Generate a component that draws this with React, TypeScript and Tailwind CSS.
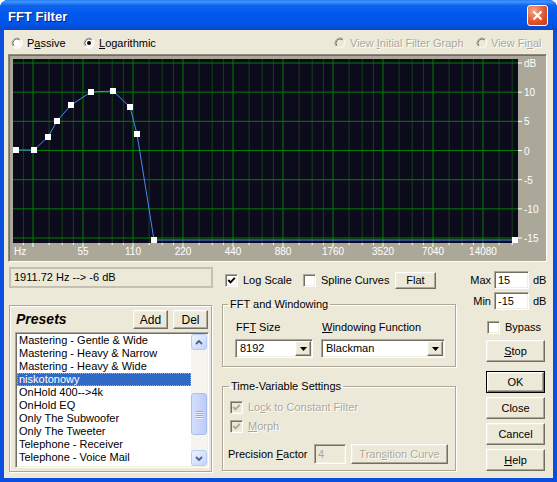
import React from 'react';

const sunken =
  'border border-t-[#ACA899] border-l-[#ACA899] border-b-white border-r-white shadow-[inset_1px_1px_0_#716F64,inset_-1px_-1px_0_#F1EFE2]';
const raised =
  'border border-t-white border-l-white border-b-[#716F64] border-r-[#716F64] shadow-[inset_-1px_-1px_0_#ACA899,inset_1px_1px_0_#F1EFE2]';
const etched = 'border border-[#ACA899] shadow-[inset_1px_1px_0_#fff,1px_1px_0_#fff]';
const grayText = 'text-[#ACA899] [text-shadow:1px_1px_0_#fff]';

function U({ children }: { children: React.ReactNode }) {
  return <span className="underline decoration-1 underline-offset-[1px]">{children}</span>;
}

function Radio({ checked, disabled }: { checked?: boolean; disabled?: boolean }) {
  return (
    <svg width="12" height="12" viewBox="0 0 12 12" className="shrink-0">
      <circle cx="6" cy="6" r="5.5" fill={disabled ? '#ECE9D8' : '#fff'} />
      <path d="M2.46 9.54 A5 5 0 0 1 9.54 2.46" stroke="#ACA899" fill="none" />
      <path d="M9.54 2.46 A5 5 0 0 1 2.46 9.54" stroke="#fff" fill="none" />
      <path d="M3.17 8.83 A4 4 0 0 1 8.83 3.17" stroke="#716F64" fill="none" />
      <path d="M8.83 3.17 A4 4 0 0 1 3.17 8.83" stroke="#F1EFE2" fill="none" />
      {checked && <circle cx="6" cy="6" r="2" fill="#000" />}
    </svg>
  );
}

function Check({ checked, disabled }: { checked?: boolean; disabled?: boolean }) {
  return (
    <span
      className={`w-[13px] h-[13px] shrink-0 flex items-center justify-center ${sunken} ${
        disabled ? 'bg-[#ECE9D8]' : 'bg-white'
      }`}
    >
      {checked && (
        <svg width="9" height="9" viewBox="0 0 9 9">
          <path
            d="M1.3 4 L3.5 6.3 L7.8 1.8"
            stroke={disabled ? '#ACA899' : '#000'}
            strokeWidth="1.9"
            fill="none"
          />
        </svg>
      )}
    </span>
  );
}

function Btn({
  children,
  className = '',
  disabled,
}: {
  children: React.ReactNode;
  className?: string;
  disabled?: boolean;
}) {
  return (
    <button
      type="button"
      className={`flex items-center justify-center bg-[#ECE9D8] ${raised} ${
        disabled ? grayText : 'text-black'
      } ${className}`}
    >
      {children}
    </button>
  );
}

function Combo({ value, className = '' }: { value: string; className?: string }) {
  return (
    <div className={`h-[19px] bg-white flex p-[1px] ${sunken} ${className}`}>
      <div className="flex-1 flex items-center pl-[3px]">{value}</div>
      <div className={`w-[16px] bg-[#ECE9D8] flex items-center justify-center ${raised}`}>
        <svg width="7" height="4" viewBox="0 0 7 4">
          <path d="M0 0h7L3.5 4z" fill="#000" />
        </svg>
      </div>
    </div>
  );
}

function Edit({ value, className = '', disabled }: { value: string; className?: string; disabled?: boolean }) {
  return (
    <div
      className={`flex items-center pl-[3px] ${sunken} ${
        disabled ? 'bg-[#ECE9D8] text-[#ACA899]' : 'bg-white'
      } ${className}`}
    >
      {value}
    </div>
  );
}

// graph geometry (svg coords, panel inner origin)
const majorX = Array.from({ length: 10 }, (_, k) => 24 + 50 * k);
const minorX = [14.4, ...majorX.flatMap((b) => [b + 16.1, b + 29.2, b + 40.4])].filter(
  (x) => x > 4 && x < 509
);
const hY = Array.from({ length: 7 }, (_, i) => 8 + i * 29.17);
const dbLabels = ['dB', '10', '5', '0', '-5', '-10', '-15'];
const hzLabels = ['55', '110', '220', '440', '880', '1760', '3520', '7040', '14080'];
const points: [number, number][] = [
  [7, 95],
  [25, 95],
  [39, 82],
  [48, 66],
  [62, 50],
  [82, 37],
  [104, 36],
  [121, 52],
  [128, 79],
  [145, 185],
  [506, 185],
];

function Graph() {
  return (
    <svg width="535" height="204" viewBox="0 0 535 204" className="block">
      <rect x="4" y="4" width="505" height="184" fill="#0B0B1B" />
      {minorX.map((x) => (
        <line key={'m' + x} x1={x} x2={x} y1="4" y2="188" stroke="#17401A" />
      ))}
      {majorX.map((x) => (
        <line key={'M' + x} x1={x} x2={x} y1="4" y2="188" stroke="#007F00" />
      ))}
      {hY.map((y) => (
        <line key={'h' + y} x1="4" x2="509" y1={y} y2={y} stroke="#007F00" />
      ))}
      <polyline
        points={points.map((p) => p.join(',')).join(' ')}
        fill="none"
        stroke="#4C86F5"
        strokeWidth="1"
      />
      {points.map(([x, y]) => (
        <rect key={'p' + x} x={x - 3} y={y - 3} width="6" height="6" fill="#fff" />
      ))}
      {hY.map((y, i) => (
        <g key={'r' + i}>
          <line x1="509" x2="513" y1={y} y2={y} stroke="#fff" />
          <text
            x="515"
            y={y + 4}
            fill="#fff"
            fontSize="10"
            fontFamily="Liberation Sans, Arial, sans-serif"
          >
            {dbLabels[i]}
          </text>
        </g>
      ))}
      {majorX.map((x) => (
        <line key={'t' + x} x1={x} x2={x} y1="188" y2="192" stroke="#fff" />
      ))}
      {minorX.map((x) => (
        <line key={'tm' + x} x1={x} x2={x} y1="188" y2="190" stroke="#fff" />
      ))}
      <text x="5" y="200" fill="#fff" fontSize="10" fontFamily="Liberation Sans, Arial, sans-serif">
        Hz
      </text>
      {hzLabels.map((l, i) => (
        <text
          key={l}
          x={74 + 50 * i}
          y="200"
          fill="#fff"
          fontSize="10"
          textAnchor="middle"
          fontFamily="Liberation Sans, Arial, sans-serif"
        >
          {l}
        </text>
      ))}
    </svg>
  );
}

const presets = [
  'Mastering - Gentle & Wide',
  'Mastering - Heavy & Narrow',
  'Mastering - Heavy & Wide',
  'niskotonowy',
  'OnHold 400-->4k',
  'OnHold EQ',
  'Only The Subwoofer',
  'Only The Tweeter',
  'Telephone - Receiver',
  'Telephone - Voice Mail',
  'Thin Client Speaker',
];

function ScrollBtn({ up }: { up?: boolean }) {
  return (
    <div className="h-[16px] rounded-[3px] border border-[#B7CBF6] bg-[linear-gradient(135deg,#EEF3FF,#C4D5FA)] flex items-center justify-center">
      <svg width="8" height="5" viewBox="0 0 8 5">
        <path
          d={up ? 'M1 4 L4 1 L7 4' : 'M1 1 L4 4 L7 1'}
          stroke="#4D6185"
          strokeWidth="1.8"
          fill="none"
        />
      </svg>
    </div>
  );
}

function PresetList() {
  return (
    <div className={`ml-[5px] mt-[3px] w-[194px] h-[136px] bg-white flex p-[1px] ${sunken}`}>
      <div className="w-[174px] overflow-hidden">
        {presets.map((p) => (
          <div
            key={p}
            className={`h-[13px] leading-[13px] pl-[2px] whitespace-nowrap ${
              p === 'niskotonowy'
                ? 'bg-[#316AC5] text-white outline-1 outline-dotted outline-[#D9A441] -outline-offset-1'
                : 'text-black'
            }`}
          >
            {p}
          </div>
        ))}
      </div>
      <div className="w-[16px] flex flex-col bg-[#F5F4EE]">
        <ScrollBtn up />
        <div className="flex-1 flex flex-col">
          <div className="h-[43px]" />
          <div className="h-[42px] rounded-[3px] border border-[#A9BEF0] bg-[linear-gradient(90deg,#D3DEFC,#BCCDF8)] flex flex-col items-center justify-center gap-[1px]">
            {[0, 1, 2, 3].map((i) => (
              <div key={i} className="w-[7px] h-[1px] bg-[#8CA6E6] shadow-[0_1px_0_#EEF3FF]" />
            ))}
          </div>
        </div>
        <ScrollBtn />
      </div>
    </div>
  );
}

export default function App() {
  return (
    <div className="w-[557px] h-[482px] flex flex-col bg-[#0A4FE0] rounded-t-[8px] overflow-hidden font-['Liberation_Sans',Arial,sans-serif] text-[11px] text-black">
      {/* Title bar */}
      <div className="h-[30px] shrink-0 flex items-center pl-[8px] pr-[6px] bg-[linear-gradient(to_bottom,#2A7BF0_0%,#3D95FF_6%,#0F63EC_18%,#0058EE_45%,#0055E8_80%,#0A47C8_100%)]">
        <span className="mt-[3px] text-white font-bold text-[13px] [text-shadow:1px_1px_0_#0A1A80]">
          FFT Filter
        </span>
        <div className="ml-auto mr-[3px] w-[21px] h-[21px] rounded-[3px] border border-white bg-[radial-gradient(circle_at_30%_25%,#F2A98E,#E2572E_55%,#C43810)] flex items-center justify-center">
          <svg width="11" height="11" viewBox="0 0 11 11">
            <path d="M1.5 1.5 L9.5 9.5 M9.5 1.5 L1.5 9.5" stroke="#fff" strokeWidth="2.2" />
          </svg>
        </div>
      </div>

      {/* Client area */}
      <div className="flex-1 mx-[4px] mb-[4px] bg-[#ECE9D8] flex flex-col">
        {/* Radio row */}
        <div className="h-[24px] pt-[2px] flex items-center">
          <div className="w-[79px] pl-[7px] flex items-center gap-[4px]">
            <Radio />
            <span>
              P<U>a</U>ssive
            </span>
          </div>
          <div className="w-[251px] flex items-center gap-[4px]">
            <Radio checked />
            <span>
              <U>L</U>ogarithmic
            </span>
          </div>
          <div className="w-[142px] flex items-center gap-[4px]">
            <Radio disabled />
            <span className={grayText}>
              View <U>I</U>nitial Filter Graph
            </span>
          </div>
          <div className="flex items-center gap-[3px]">
            <Radio disabled />
            <span className={grayText}>
              View Fi<U>n</U>al
            </span>
          </div>
        </div>

        {/* Graph */}
        <div className="ml-[4px] w-[539px] h-[208px] bg-[#ACA899] border border-t-[#8F8C7F] border-l-[#8F8C7F] border-b-white border-r-white shadow-[inset_1px_1px_0_#716F64]">
          <Graph />
        </div>

        {/* Bottom */}
        <div className="flex items-start">
          {/* Left column */}
          <div className="ml-[5px] w-[204px] flex flex-col">
            <div className="mt-[5px] h-[21px] flex items-center pl-[3px] border-2 border-[#C4C1B3]">
              1911.72 Hz --&gt; -6 dB
            </div>
            <div className={`mt-[17px] w-[203px] h-[167px] flex flex-col ${etched}`}>
              <div className="mt-[4px] h-[19px] flex items-center pl-[6px] pr-[3px]">
                <span className="flex-1 font-bold italic text-[14px]">Presets</span>
                <Btn className="w-[35px] h-[19px] text-[12px]">Add</Btn>
                <Btn className="ml-[5px] w-[35px] h-[19px] text-[12px]">Del</Btn>
              </div>
              <PresetList />
            </div>
          </div>

          {/* Middle column */}
          <div className="ml-[9px] w-[234px] flex flex-col">
            <div className="mt-[10px] h-[17px] flex items-center">
              <div className="w-[81px] pl-[3px] flex items-center gap-[5px]">
                <Check checked />
                <span>Log Scale</span>
              </div>
              <div className="w-[92px] flex items-center gap-[5px]">
                <Check />
                <span>Spline Curves</span>
              </div>
              <Btn className="w-[41px] h-[17px]">Flat</Btn>
            </div>

            <fieldset className={`mt-[9px] w-[234px] pb-[8px] ${etched}`}>
              <legend className="ml-[5px] px-[2px] leading-[13px]">FFT and Windowing</legend>
              <div className="mt-[10px] pl-[12px] flex">
                <div className="w-[78px] flex flex-col">
                  <span className="pl-[1px] leading-[13px]">
                    FF<U>T</U> Size
                  </span>
                  <Combo value="8192" className="mt-[5px] w-[78px]" />
                </div>
                <div className="ml-[8px] w-[124px] flex flex-col">
                  <span className="pl-[1px] leading-[13px]">
                    <U>W</U>indowing Function
                  </span>
                  <Combo value="Blackman" className="mt-[5px] w-[124px]" />
                </div>
              </div>
            </fieldset>

            <fieldset className={`mt-[13px] w-[234px] pb-[6px] ${etched}`}>
              <legend className="ml-[6px] px-[2px] leading-[13px]">Time-Variable Settings</legend>
              <div className="mt-[8px] ml-[7px] h-[13px] flex items-center gap-[5px]">
                <Check checked disabled />
                <span className={grayText}>
                  Lo<U>c</U>k to Constant Filter
                </span>
              </div>
              <div className="mt-[6px] ml-[7px] h-[13px] flex items-center gap-[5px]">
                <Check checked disabled />
                <span className={grayText}>
                  <U>M</U>orph
                </span>
              </div>
              <div className="mt-[11px] h-[20px] flex items-center">
                <span className="ml-[5px] w-[86px]">
                  Precision <U>F</U>actor
                </span>
                <Edit value="4" disabled className="w-[32px] h-[20px]" />
                <Btn disabled className="ml-[5px] w-[97px] h-[20px]">
                  Tran<U>s</U>ition Curve
                </Btn>
              </div>
            </fieldset>
          </div>

          {/* Right column */}
          <div className="ml-[10px] w-[82px] flex flex-col">
            <div className="mt-[9px] h-[18px] flex items-center">
              <span className="w-[25px] text-right">Max</span>
              <Edit value="15" className="ml-[3px] w-[35px] h-[18px]" />
              <span className="ml-[4px]">dB</span>
            </div>
            <div className="mt-[3px] h-[18px] flex items-center">
              <span className="w-[25px] text-right">Min</span>
              <Edit value="-15" className="ml-[3px] w-[35px] h-[18px]" />
              <span className="ml-[4px]">dB</span>
            </div>
            <div className="mt-[11px] ml-[21px] h-[13px] flex items-center gap-[5px]">
              <Check />
              <span>Bypass</span>
            </div>
            <Btn className="mt-[6px] ml-[20px] w-[59px] h-[22px]">
              <U>S</U>top
            </Btn>
            <div className="mt-[9px] ml-[20px] w-[59px] h-[22px] border border-black flex">
              <Btn className="flex-1">OK</Btn>
            </div>
            <Btn className="mt-[4px] ml-[20px] w-[59px] h-[22px]">Close</Btn>
            <Btn className="mt-[4px] ml-[20px] w-[59px] h-[22px]">Cancel</Btn>
            <Btn className="mt-[4px] ml-[20px] w-[59px] h-[22px]">
              <U>H</U>elp
            </Btn>
          </div>
        </div>
      </div>
    </div>
  );
}
